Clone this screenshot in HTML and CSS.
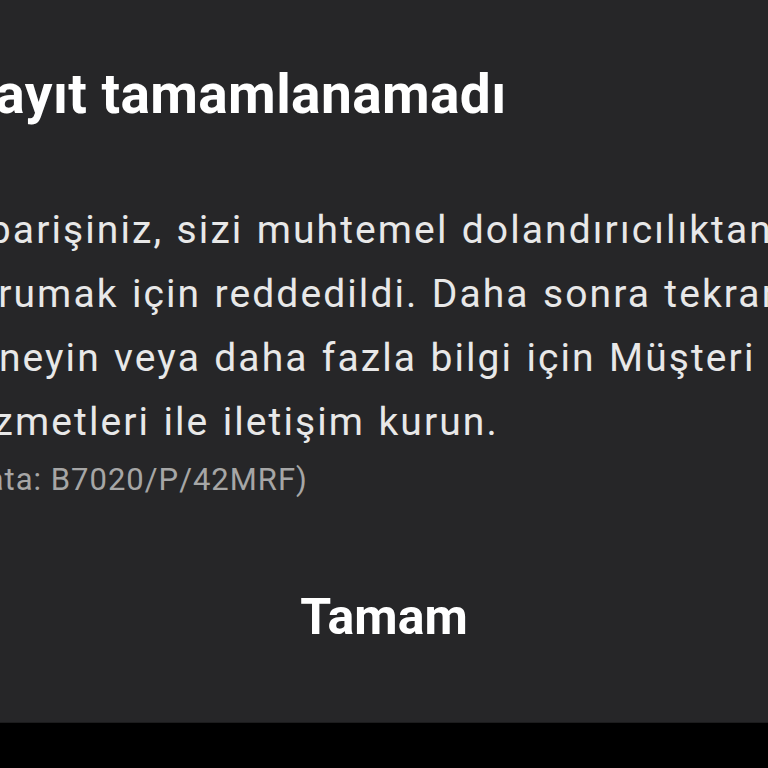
FILE: index.html
```html
<!DOCTYPE html>
<html lang="tr">
<head>
<meta charset="utf-8">
<link rel="stylesheet" href="styles.css">
</head>
<body>
<div class="screen">
  <div class="dialog">
    <h1 class="title">Kayıt tamamlanamadı</h1>
    <p class="message">Siparişiniz, sizi muhtemel dolandırıcılıktan<br>korumak için reddedildi. Daha sonra tekrar<br>deneyin veya daha fazla bilgi için Müşteri<br>Hizmetleri ile iletişim kurun.</p>
    <p class="code">(Hata: B7020/P/42MRF)</p>
    <div class="actions"><span class="button">Tamam</span></div>
  </div>
</div>
</body>
</html>
```

FILE: styles.css
```css
html, body {
  margin: 0;
  padding: 0;
  background: #000;
  overflow: hidden;
  width: 768px;
  height: 768px;
}
.screen {
  width: 768px;
  height: 768px;
  overflow: hidden;
  background: #000;
}
.dialog {
  box-sizing: border-box;
  width: 864px;
  height: 723px;
  margin-left: -48px;
  padding-top: 61px;
  background: #262628;
  border-bottom: 1px solid #1c1c1d;
  font-family: Roboto, "Noto Sans", sans-serif;
  white-space: nowrap;
}
.title {
  margin: 0;
  padding-left: 8px;
  font-size: 55px;
  line-height: 66px;
  font-weight: 700;
  letter-spacing: 0.4px;
  color: #ffffff;
}
.message {
  margin: 71px 0 0;
  font-size: 39px;
  line-height: 64px;
  letter-spacing: 2.1px;
  word-spacing: 1.5px;
  color: #e8e8e8;
}
.code {
  margin: 6px 0 0;
  font-size: 31px;
  line-height: 40px;
  letter-spacing: 1px;
  color: #a6a6a6;
}
.actions {
  margin-top: 87px;
  display: flex;
  justify-content: center;
}
.button {
  font-size: 50px;
  line-height: 60px;
  font-weight: 700;
  color: #ffffff;
}
```
